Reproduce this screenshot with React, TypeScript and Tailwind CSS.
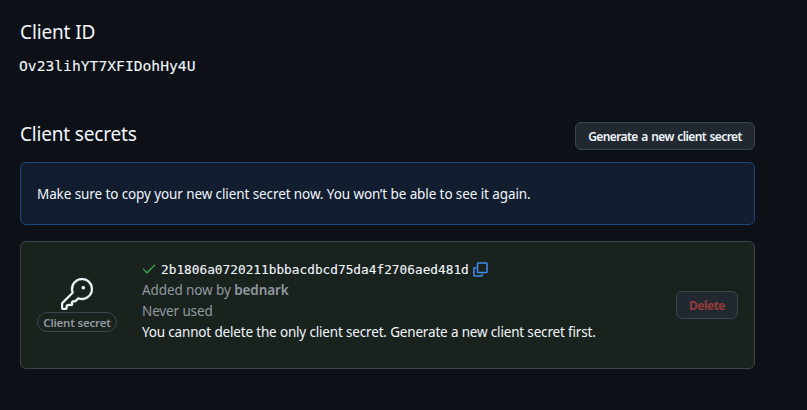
import { GoCheck, GoCopy, GoKey } from "react-icons/go";

const mono = "font-['DejaVu_Sans_Mono',monospace] [-webkit-text-stroke:0.1px_currentColor]";

export default function App() {
  return (
    <div className="h-[410px] w-[807px] overflow-hidden bg-[#0d1117] pl-5 pr-[52px] pt-5 font-['Noto_Sans',sans-serif] text-[13.5px] leading-[21px] text-[#f0f6fc]">
      <h2 className="h-6 whitespace-nowrap text-[19px] leading-6 tracking-[-0.13px]">Client ID</h2>
      <div className={`-ml-px mt-[10px] h-6 whitespace-nowrap text-[14.67px] leading-6 ${mono}`}>Ov23lihYT7XFIDohHy4U</div>
      <div className="mt-11 flex h-7 items-start justify-between">
        <h2 className="whitespace-nowrap text-[19px] leading-6 tracking-[-0.18px]">Client secrets</h2>
        <button className="flex h-7 w-[180px] items-center justify-center whitespace-nowrap rounded-md border border-[#3d444d] bg-[#212830] text-[12px] font-semibold tracking-[-0.6px] [word-spacing:1px]">
          Generate a new client secret
        </button>
      </div>
      <div className="mt-3 flex h-[63px] items-center rounded-md border border-[#1f4681] bg-[#121d2f] px-4 pt-0.5">
        <p className="whitespace-nowrap tracking-[-0.1px]">Make sure to copy your new client secret now. You won’t be able to see it again.</p>
      </div>
      <div className="mt-4 flex h-32 items-center rounded-md border border-[#3d444d] bg-[#1a221e] px-4">
        <div className="flex w-20 flex-col items-center">
          <GoKey className="size-8" stroke="currentColor" strokeWidth={0.25} />
          <span className="mt-0.5 flex h-5 w-20 items-center justify-center whitespace-nowrap rounded-full border border-[#3d444d] text-[11.5px] font-semibold tracking-[-0.2px] text-[#9198a1]">
            Client secret
          </span>
        </div>
        <div className="-mt-[9px] ml-[25px] flex-1 whitespace-nowrap">
          <div className="-ml-px flex h-[21px] items-center">
            <GoCheck className="size-4 text-[#3fb950]" stroke="currentColor" strokeWidth={0.3} />
            <code className={`ml-1 text-[12.79px] ${mono}`}>2b1806a0720211bbbacdbcd75da4f2706aed481d</code>
            <GoCopy className="ml-[3px] size-[17px] text-[#4493f8]" stroke="currentColor" strokeWidth={0.6} />
          </div>
          <p className="tracking-[-0.1px] text-[#9198a1]">Added now by <strong className="font-semibold">bednark</strong></p>
          <p className="tracking-[-0.13px] text-[#9198a1]">Never used</p>
          <p className="tracking-[-0.17px]">You cannot delete the only client secret. Generate a new client secret first.</p>
        </div>
        <button className="flex h-7 w-[62px] items-center justify-center rounded-md border border-[#3d444d] bg-[#212830] text-[12px] font-bold tracking-[-0.5px] text-[#943a3b]">Delete</button>
      </div>
    </div>
  );
}
